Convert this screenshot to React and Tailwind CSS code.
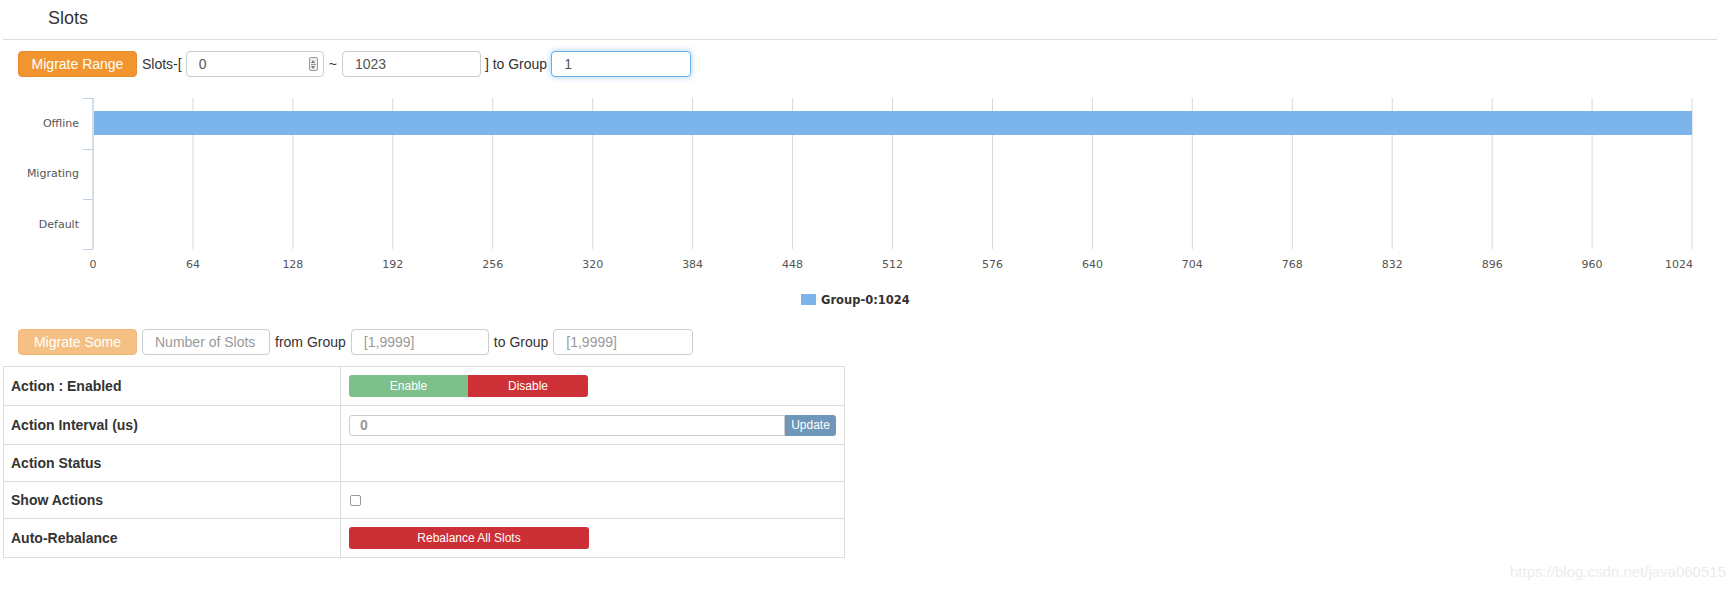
const ticks = [0, 64, 128, 192, 256, 320, 384, 448, 512, 576, 640, 704, 768, 832, 896, 960, 1024];
const X0 = 93;
const STEP = 99.94;

function SlotsChart() {
  const lanes = [
    { name: "Offline", y: 39 },
    { name: "Migrating", y: 89 },
    { name: "Default", y: 140 },
  ];
  return (
    <svg width="1735" height="230" className="block" style={{ fontFamily: '"DejaVu Sans", Verdana, sans-serif' }}>
      {ticks.map((t, i) => (
        <line key={t} x1={X0 + i * STEP} x2={X0 + i * STEP} y1="10" y2="161" stroke="#d8d8d8" strokeWidth="1" />
      ))}
      <line x1={X0} x2={X0} y1="10" y2="161" stroke="#c0d0e0" strokeWidth="1" />
      {[10, 61, 111, 161].map((y) => (
        <line key={y} x1="83" x2={X0} y1={y + 0.5} y2={y + 0.5} stroke="#c0d0e0" strokeWidth="1" />
      ))}
      <rect x={X0 + 1} y="23" width={16 * STEP - 1} height="24" fill="#7cb5ec" />
      {lanes.map((l) => (
        <text key={l.name} x="79" y={l.y} textAnchor="end" fontSize="11" fill="#555555">
          {l.name}
        </text>
      ))}
      {ticks.map((t, i) => (
        <text
          key={t}
          x={i === 16 ? X0 + i * STEP + 1 : X0 + i * STEP}
          y="180"
          textAnchor={i === 16 ? "end" : "middle"}
          fontSize="11"
          fill="#555555"
        >
          {t}
        </text>
      ))}
      <rect x="801" y="206" width="15" height="11" fill="#7cb5ec" />
      <text x="821" y="216" fontSize="11.5" fontWeight="bold" fill="#333333">
        Group-0:1024
      </text>
    </svg>
  );
}

function TextBox({ value, placeholder, width, focused }) {
  return (
    <input
      readOnly
      value={value}
      placeholder={placeholder}
      className={
        "h-[26px] rounded-[4px] border bg-white px-[12px] text-[14px] text-[#555] placeholder:text-[#999] outline-none " +
        width +
        (focused ? " border-[#66afe9] shadow-[0_0_6px_rgba(102,175,233,0.6)]" : " border-[#ccc]")
      }
    />
  );
}

function Row({ label, children, h, last }) {
  return (
    <div className={"flex " + h + (last ? "" : " border-b border-[#ddd]")}>
      <div className="flex w-[337px] items-center border-r border-[#ddd] pl-[7px] text-[14px] font-bold text-[#333]">
        {label}
      </div>
      <div className="flex flex-1 items-center pl-[8px]">{children}</div>
    </div>
  );
}

export default function App() {
  return (
    <div className="relative h-[591px] w-[1735px] overflow-hidden bg-white text-[#333]" style={{ fontFamily: '"Liberation Sans", Arial, sans-serif' }}>
      <div className="ml-[3px] h-[40px] w-[1714px] border-b border-[#ddd] pl-[45px] pt-[8px] text-[18px] leading-[20px]">
        Slots
      </div>

      <div className="ml-[18px] mt-[11px] flex items-center text-[14px]">
        <button className="h-[26px] w-[119px] rounded-[4px] border border-[#e8892a] bg-[#f0952f] text-[14px] text-white">
          Migrate Range
        </button>
        <span className="pl-[5px] pr-[4px]">Slots-[</span>
        <div className="relative">
          <TextBox value="0" width="w-[138px]" />
          <span className="absolute right-[6px] top-[6px] flex h-[14px] w-[9px] flex-col items-center justify-center gap-[1px] rounded-[2px] border border-[#999] bg-[#eee]">
            <span className="h-0 w-0 border-x-[2.5px] border-b-[3px] border-x-transparent border-b-[#777]" />
            <span className="h-[1px] w-[5px] bg-[#999]" />
            <span className="h-0 w-0 border-x-[2.5px] border-t-[3px] border-x-transparent border-t-[#777]" />
          </span>
        </div>
        <span className="px-[5px]">~</span>
        <TextBox value="1023" width="w-[139px]" />
        <span className="px-[4px]">] to Group</span>
        <TextBox value="1" width="w-[140px]" focused />
      </div>

      <div className="mt-[11px]">
        <SlotsChart />
      </div>

      <div className="ml-[18px] mt-[11px] flex items-center text-[14px]">
        <button className="h-[26px] w-[119px] rounded-[4px] border border-[#f3b877] bg-[#f5c084] text-[14px] text-white">
          Migrate Some
        </button>
        <span className="w-[5px]" />
        <TextBox value="" placeholder="Number of Slots" width="w-[128px]" />
        <span className="px-[5px]">from Group</span>
        <TextBox value="" placeholder="[1,9999]" width="w-[138px]" />
        <span className="px-[5px]">to Group</span>
        <TextBox value="" placeholder="[1,9999]" width="w-[140px]" />
      </div>

      <div className="ml-[3px] mt-[11px] w-[842px] border border-[#ddd]">
        <Row label="Action : Enabled" h="h-[39px]">
          <div className="flex h-[22px] text-[12px] text-white">
            <button className="w-[119px] rounded-l-[3px] bg-[#7dc08b]">Enable</button>
            <button className="w-[120px] rounded-r-[3px] bg-[#cd3036]">Disable</button>
          </div>
        </Row>
        <Row label="Action Interval (us)" h="h-[39px]">
          <div className="flex h-[21px]">
            <input
              readOnly
              value="0"
              className="w-[436px] rounded-l-[3px] border border-[#ccc] px-[10px] text-[14px] font-bold text-[#999] outline-none"
            />
            <button className="w-[51px] rounded-r-[3px] bg-[#6e97b9] text-[12px] text-white">Update</button>
          </div>
        </Row>
        <Row label="Action Status" h="h-[37px]" />
        <Row label="Show Actions" h="h-[37px]">
          <span className="ml-[1px] h-[11px] w-[11px] rounded-[2px] border border-[#999] bg-white" />
        </Row>
        <Row label="Auto-Rebalance" h="h-[38px]" last>
          <button className="h-[22px] w-[240px] rounded-[3px] bg-[#cc2f35] text-[12px] text-white">
            Rebalance All Slots
          </button>
        </Row>
      </div>

      <div className="absolute bottom-[8px] right-[9px] text-[15px] text-[#ececec]">
        https://blog.csdn.net/java060515
      </div>
    </div>
  );
}
